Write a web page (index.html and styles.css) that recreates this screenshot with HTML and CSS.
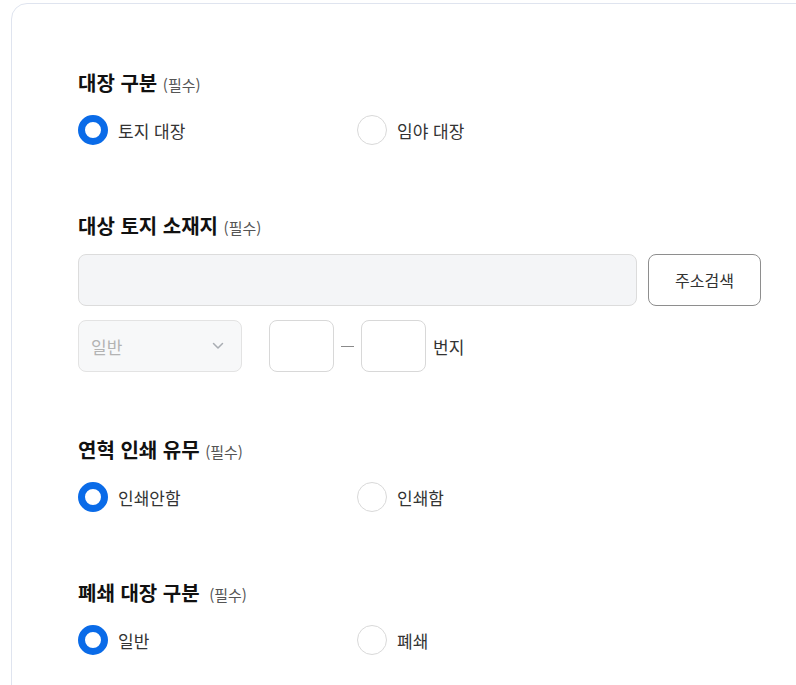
FILE: index.html
```html
<!DOCTYPE html>
<html lang="ko">
<head>
<meta charset="utf-8">
<link rel="stylesheet" href="styles.css">
</head>
<body>
<div class="card">
  <section class="section">
    <h2 class="title">대장 구분 <span class="req">(필수)</span></h2>
    <div class="radios">
      <label class="radio"><span class="dot on"></span>토지 대장</label>
      <label class="radio"><span class="dot"></span>임야 대장</label>
    </div>
  </section>

  <section class="section addr">
    <h2 class="title">대상 토지 소재지 <span class="req">(필수)</span></h2>
    <div class="addr-row">
      <div class="addr-input"></div>
      <button class="btn">주소검색</button>
    </div>
    <div class="lot-row">
      <div class="select">
        <span>일반</span>
        <svg class="chev" width="12" height="8" viewBox="0 0 12 8"><path d="M1.5 1.5 L6 6 L10.5 1.5" fill="none" stroke="#a9adb3" stroke-width="1.5" stroke-linecap="round" stroke-linejoin="round"/></svg>
      </div>
      <div class="box"></div>
      <span class="dash"></span>
      <div class="box"></div>
      <span class="unit">번지</span>
    </div>
  </section>

  <section class="section">
    <h2 class="title">연혁 인쇄 유무 <span class="req">(필수)</span></h2>
    <div class="radios">
      <label class="radio"><span class="dot on"></span>인쇄안함</label>
      <label class="radio"><span class="dot"></span>인쇄함</label>
    </div>
  </section>

  <section class="section">
    <h2 class="title">폐쇄 대장 구분 <span class="req wide">(필수)</span></h2>
    <div class="radios">
      <label class="radio"><span class="dot on"></span>일반</label>
      <label class="radio"><span class="dot"></span>폐쇄</label>
    </div>
  </section>
</div>
</body>
</html>
```

FILE: styles.css
```css
html, body {
  margin: 0;
  padding: 0;
  background: #ffffff;
  overflow: hidden;
}
body {
  font-family: "Noto Sans CJK KR", "Noto Sans", sans-serif;
  color: #222;
  width: 796px;
  height: 685px;
}
.card {
  margin: 3px 0 0 11px;
  width: 900px;
  height: 760px;
  box-sizing: border-box;
  border: 1px solid #dfe4ef;
  border-radius: 16px;
  padding: 67px 0 0 66px;
}
.section {
  margin-bottom: 69px;
}
.section.addr {
  margin-bottom: 66px;
}
.title {
  margin: 0 0 18px;
  font-size: 20px;
  line-height: 24px;
  font-weight: 700;
  color: #111;
}
.req {
  font-size: 15px;
  font-weight: 400;
  color: #555;
}
.req.wide {
  margin-left: 4px;
}
.radios {
  display: grid;
  grid-template-columns: 279px auto;
}
.radio {
  display: flex;
  align-items: center;
  gap: 10px;
  height: 30px;
  font-size: 17px;
  font-weight: 400;
  color: #333;
}
.dot {
  width: 30px;
  height: 30px;
  box-sizing: border-box;
  border-radius: 50%;
  border: 1.5px solid #d9d9d9;
  background: #fff;
  flex: none;
}
.dot.on {
  border: 7px solid #0a6be8;
}
.addr-row {
  display: flex;
  gap: 11px;
  margin-top: -4px;
}
.addr-input {
  width: 559px;
  height: 52px;
  box-sizing: border-box;
  border: 1px solid #dcdcdc;
  border-radius: 8px;
  background: #f4f5f7;
}
.btn {
  width: 113px;
  height: 52px;
  box-sizing: border-box;
  border: 1px solid #8e8e8e;
  border-radius: 8px;
  background: #fff;
  font-family: inherit;
  font-size: 16px;
  font-weight: 400;
  color: #333;
  padding: 0;
}
.lot-row {
  display: flex;
  align-items: center;
  margin-top: 14px;
}
.select {
  width: 164px;
  height: 52px;
  box-sizing: border-box;
  border: 1px solid #e3e3e3;
  border-radius: 8px;
  background: #f7f8f9;
  display: flex;
  align-items: center;
  justify-content: space-between;
  padding: 0 17px 0 12px;
  font-size: 17px;
  color: #b3b3b3;
  margin-right: 27px;
}
.chev {
  display: block;
}
.box {
  width: 65px;
  height: 52px;
  box-sizing: border-box;
  border: 1px solid #d8d8d8;
  border-radius: 8px;
  background: #fff;
}
.dash {
  width: 13px;
  height: 1px;
  background: #8a8a8a;
  margin: 0 7px;
}
.unit {
  margin-left: 7px;
  font-size: 17px;
  font-weight: 400;
  color: #333;
}
```
